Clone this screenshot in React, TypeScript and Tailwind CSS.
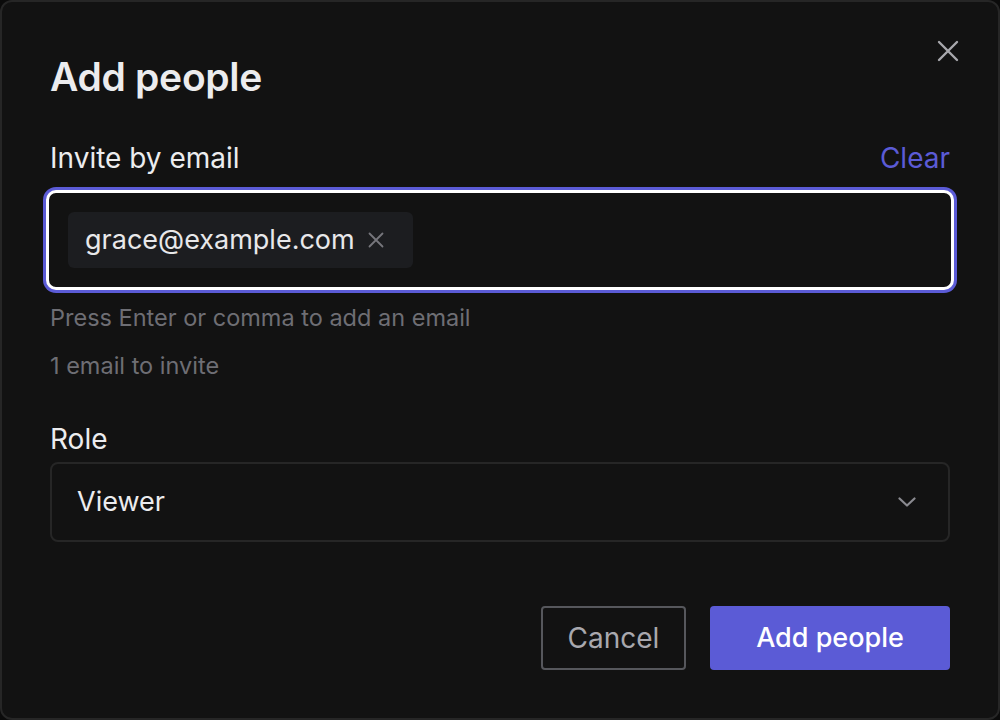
function CloseIcon() {
  return (
    <svg width="22" height="22" viewBox="0 0 22 22" fill="none" stroke="currentColor" strokeWidth="2.4" strokeLinecap="round">
      <path d="M2 2L20 20M20 2L2 20" />
    </svg>
  )
}

function ChipX() {
  return (
    <svg width="16" height="16" viewBox="0 0 16 16" fill="none" stroke="currentColor" strokeWidth="1.8" strokeLinecap="round">
      <path d="M1.5 1.5L14.5 14.5M14.5 1.5L1.5 14.5" />
    </svg>
  )
}

function Chevron() {
  return (
    <svg width="18" height="12" viewBox="0 0 18 12" fill="none" stroke="currentColor" strokeWidth="2.2" strokeLinecap="round" strokeLinejoin="round">
      <path d="M1.5 2.5L9 9.5L16.5 2.5" />
    </svg>
  )
}

export default function App() {
  return (
    <div
      className="h-[720px] w-[1000px] bg-[#0b0b0b]"
      style={{ fontFamily: "Inter, 'Noto Sans', sans-serif" }}
    >
      <div className="relative flex h-full w-full flex-col rounded-[12px] border-2 border-[#262626] bg-[#121212] px-[48px] pt-[51px]">
        {/* Close */}
        <button className="absolute right-[39px] top-[38px] text-[#a8a8ad]">
          <CloseIcon />
        </button>

        <h1 className="text-[39px] font-semibold leading-[48px] tracking-[-0.3px] text-[#ececee]">Add people</h1>

        {/* Invite by email */}
        <div className="mt-[39px] flex items-center justify-between">
          <label className="text-[28px] leading-[36px] text-[#ececee]">Invite by email</label>
          <button className="text-[28px] leading-[36px] text-[#5b5bd6]">Clear</button>
        </div>

        <div className="mx-[-4px] mt-[14px] flex h-[100px] items-center rounded-[10px] border-[3px] border-white bg-[#121212] px-[19px] shadow-[0_0_0_3px_#5b5bd6]">
          <span className="flex h-[56px] items-center gap-[13px] rounded-[6px] bg-[#1c1d20] pl-[17px] pr-[29px] text-[27px] text-[#e8e8ea]">
            grace@example.com
            <span className="text-[#76767c]">
              <ChipX />
            </span>
          </span>
        </div>

        <p className="mt-[12px] text-[23.5px] leading-[32px] text-[#6e6e74]">Press Enter or comma to add an email</p>
        <p className="mt-[16px] text-[23.5px] leading-[32px] text-[#6e6e74]">1 email to invite</p>

        {/* Role */}
        <label className="mt-[39px] text-[28px] leading-[36px] text-[#ececee]">Role</label>
        <div className="mt-[5px] flex h-[80px] items-center justify-between rounded-[8px] border-2 border-[#262626] pl-[25px] pr-[32px]">
          <span className="text-[27px] text-[#ececee]">Viewer</span>
          <span className="text-[#8a8a90]">
            <Chevron />
          </span>
        </div>

        {/* Actions */}
        <div className="mt-[64px] flex justify-end gap-[24px]">
          <button className="h-[64px] w-[145px] rounded-[4px] border-2 border-[#56575c] text-[28px] text-[#a8a8ae]">
            Cancel
          </button>
          <button className="h-[64px] w-[240px] rounded-[4px] bg-[#5b5bd6] text-[27px] font-medium text-white">
            Add people
          </button>
        </div>
      </div>
    </div>
  )
}
